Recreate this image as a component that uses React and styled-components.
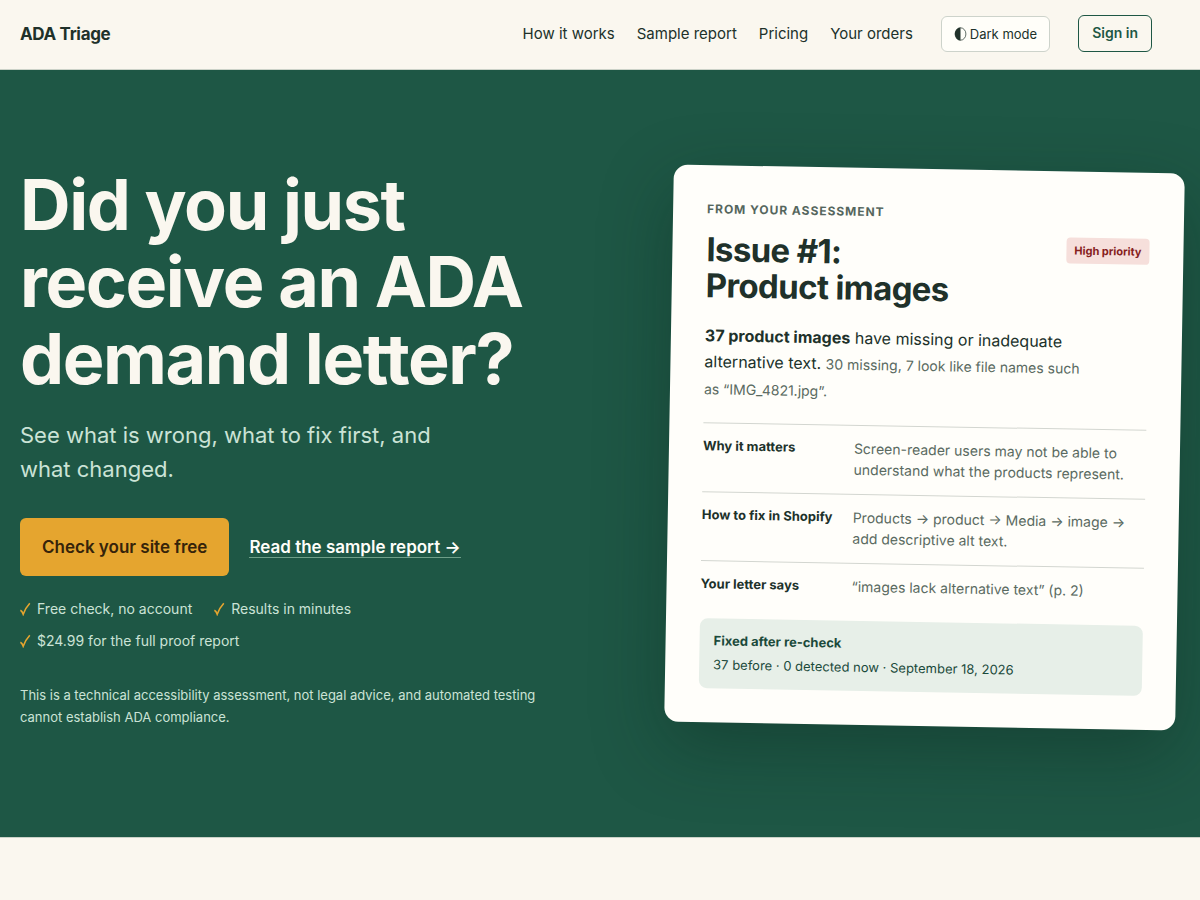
import React from "react";
import styled, { createGlobalStyle } from "styled-components";

const GlobalStyle = createGlobalStyle`
  *, *::before, *::after { box-sizing: border-box; }
  body {
    margin: 0;
    background: #faf7ef;
    color: #20312a;
    font-family: Inter, "Liberation Sans", sans-serif;
    font-size: 16px;
    overflow-x: hidden;
  }
  h1, h2, p, ul, dl, dd { margin: 0; }
  ul { padding: 0; list-style: none; }
  a { color: inherit; text-decoration: none; }
  button { font-family: inherit; cursor: pointer; }
`;

const Header = styled.header`
  display: flex;
  align-items: center;
  justify-content: space-between;
  min-height: 70px;
  padding: 0 48px 2px 20px;
  border-bottom: 1px solid #cbd2c8;
`;

const Brand = styled.a`
  font-size: 17px;
  font-weight: 700;
  line-height: 24px;
  letter-spacing: -0.02em;
`;

const Nav = styled.nav`
  display: flex;
  align-items: center;
  gap: 28px;
`;

const NavLinks = styled.ul`
  display: flex;
  gap: 22px;
  font-size: 15px;
  line-height: 24px;
`;

const ThemeButton = styled.button`
  display: flex;
  align-items: center;
  gap: 3px;
  height: 36px;
  padding: 0 12px;
  border: 1px solid #cdd3cb;
  border-radius: 6px;
  background: #fffef9;
  color: #20312a;
  font-size: 13px;
`;

const SignIn = styled.a`
  height: 37px;
  padding: 0 13px;
  border: 1px solid #1e5745;
  border-radius: 6px;
  color: #1e5745;
  font-size: 14px;
  font-weight: 600;
  line-height: 34px;
`;

const Hero = styled.section`
  display: grid;
  grid-template-columns: minmax(0, 116fr) minmax(0, 100fr);
  gap: 56px;
  align-items: center;
  padding: 96px 20px 109px;
  border-bottom: 1px solid #cbd2c8;
  background: #1e5745;
`;

const Title = styled.h1`
  color: #faf7ef;
  font-size: 70px;
  font-weight: 700;
  line-height: 77px;
  letter-spacing: -0.02em;
`;

const Lead = styled.p`
  max-width: 440px;
  margin-top: 21px;
  color: #cbe3d6;
  font-size: 22px;
  line-height: 34px;
`;

const Actions = styled.div`
  display: flex;
  align-items: center;
  gap: 20px;
  margin-top: 32px;
  font-size: 17px;
  font-weight: 600;
`;

const PrimaryButton = styled.button`
  height: 58px;
  padding: 0 22px;
  border: 0;
  border-radius: 6px;
  background: #e5a52f;
  color: #35230a;
  font-size: inherit;
  font-weight: inherit;
`;

const SampleLink = styled.a`
  border-bottom: 1px solid #6f9f89;
  color: #fffef9;
  line-height: 20px;
`;

const Perks = styled.ul`
  display: flex;
  flex-wrap: wrap;
  gap: 10px 22px;
  max-width: 440px;
  margin-top: 22px;
  color: #cbe3d6;
  font-size: 14px;
  line-height: 22px;
`;

const Perk = styled.li`
  display: flex;
  align-items: center;
  gap: 6px;
`;

const Disclaimer = styled.p`
  max-width: 540px;
  margin-top: 32px;
  color: #cbe3d6;
  font-size: 13px;
  line-height: 22px;
`;

const Card = styled.article`
  padding: 34px;
  border-radius: 14px;
  background: #fffefa;
  box-shadow: 0 24px 70px rgba(10, 35, 25, 0.35);
  transform: rotate(1deg);
`;

const Eyebrow = styled.p`
  color: #55665d;
  font-size: 12px;
  font-weight: 700;
  line-height: 19px;
  letter-spacing: 0.08em;
  text-transform: uppercase;
`;

const CardHead = styled.div`
  display: flex;
  align-items: flex-start;
  justify-content: space-between;
  margin-top: 13px;
`;

const CardTitle = styled.h2`
  font-size: 33px;
  font-weight: 700;
  line-height: 36px;
  letter-spacing: -0.02em;
`;

const Priority = styled.span`
  padding: 0 8px;
  border-radius: 4px;
  background: #f6dfdb;
  color: #86211d;
  font-size: 11px;
  font-weight: 700;
  line-height: 26px;
`;

const Summary = styled.p`
  max-width: 390px;
  margin: 19px 0 20px;
  font-size: 16px;
  line-height: 26px;
`;

const Detail = styled.span`
  color: #5a6a61;
  font-size: 14px;
`;

const Row = styled.div`
  display: grid;
  grid-template-columns: 136px minmax(0, 1fr);
  gap: 15px;
  padding: 12px 0 14px;
  border-top: 1px solid #d3d6d0;
  line-height: 21px;
`;

const Term = styled.dt`
  font-size: 13px;
  font-weight: 700;
  white-space: nowrap;
`;

const Description = styled.dd`
  color: #5a6a61;
  font-size: 14px;
`;

const Result = styled.div`
  margin-top: 10px;
  padding: 10px 14px 12px;
  border-radius: 8px;
  background: #e7efe8;
  color: #1b4a3b;
  font-size: 13px;
  line-height: 24px;
`;

const links = ["How it works", "Sample report", "Pricing", "Your orders"];
const perks = ["Free check, no account", "Results in minutes", "$24.99 for the full proof report"];
const rows = [
  ["Why it matters", "Screen-reader users may not be able to understand what the products represent."],
  ["How to fix in Shopify", "Products → product → Media → image → add descriptive alt text."],
  ["Your letter says", "“images lack alternative text” (p. 2)"],
];

const HalfCircle = () => (
  <svg width="13" height="14" viewBox="0 0 13 14" aria-hidden="true">
    <ellipse cx="6.5" cy="7" rx="5.4" ry="6.2" fill="none" stroke="#20312a" strokeWidth="0.7" />
    <path d="M6.5 .6A5.6 6.4 0 0 0 6.5 13.4Z" fill="#20312a" />
  </svg>
);

const Check = () => (
  <svg width="11" height="14" viewBox="0 0 11 14" aria-hidden="true">
    <path d="M.4 8.2C1.6 8.8 2.5 10.2 3.2 12.2C4.6 8.4 6.8 4.4 9.8 1.2" fill="none" stroke="#e5a52f" strokeWidth="1.6" />
  </svg>
);

export default function App() {
  return (
    <>
      <GlobalStyle />
      <Header>
        <Brand href="#">ADA Triage</Brand>
        <Nav>
          <NavLinks>
            {links.map((label) => (
              <li key={label}><a href="#">{label}</a></li>
            ))}
          </NavLinks>
          <ThemeButton type="button"><HalfCircle />Dark mode</ThemeButton>
          <SignIn href="#">Sign in</SignIn>
        </Nav>
      </Header>
      <main>
        <Hero>
          <div>
            <Title>Did you just<br />receive an ADA<br />demand letter?</Title>
            <Lead>See what is wrong, what to fix first, and what changed.</Lead>
            <Actions>
              <PrimaryButton type="button">Check your site free</PrimaryButton>
              <SampleLink href="#">Read the sample report →</SampleLink>
            </Actions>
            <Perks>
              {perks.map((label) => (
                <Perk key={label}><Check />{label}</Perk>
              ))}
            </Perks>
            <Disclaimer>
              This is a technical accessibility assessment, not legal advice, and automated testing cannot
              establish ADA compliance.
            </Disclaimer>
          </div>
          <Card>
            <Eyebrow>From your assessment</Eyebrow>
            <CardHead>
              <CardTitle>Issue #1:<br />Product images</CardTitle>
              <Priority>High priority</Priority>
            </CardHead>
            <Summary>
              <strong>37 product images</strong> have missing or inadequate alternative text.{" "}
              <Detail>30 missing, 7 look like file names such as “IMG_4821.jpg”.</Detail>
            </Summary>
            <dl>
              {rows.map(([term, text]) => (
                <Row key={term}>
                  <Term>{term}</Term>
                  <Description>{text}</Description>
                </Row>
              ))}
            </dl>
            <Result>
              <strong>Fixed after re-check</strong>
              <p>37 before · 0 detected now · September 18, 2026</p>
            </Result>
          </Card>
        </Hero>
      </main>
    </>
  );
}
